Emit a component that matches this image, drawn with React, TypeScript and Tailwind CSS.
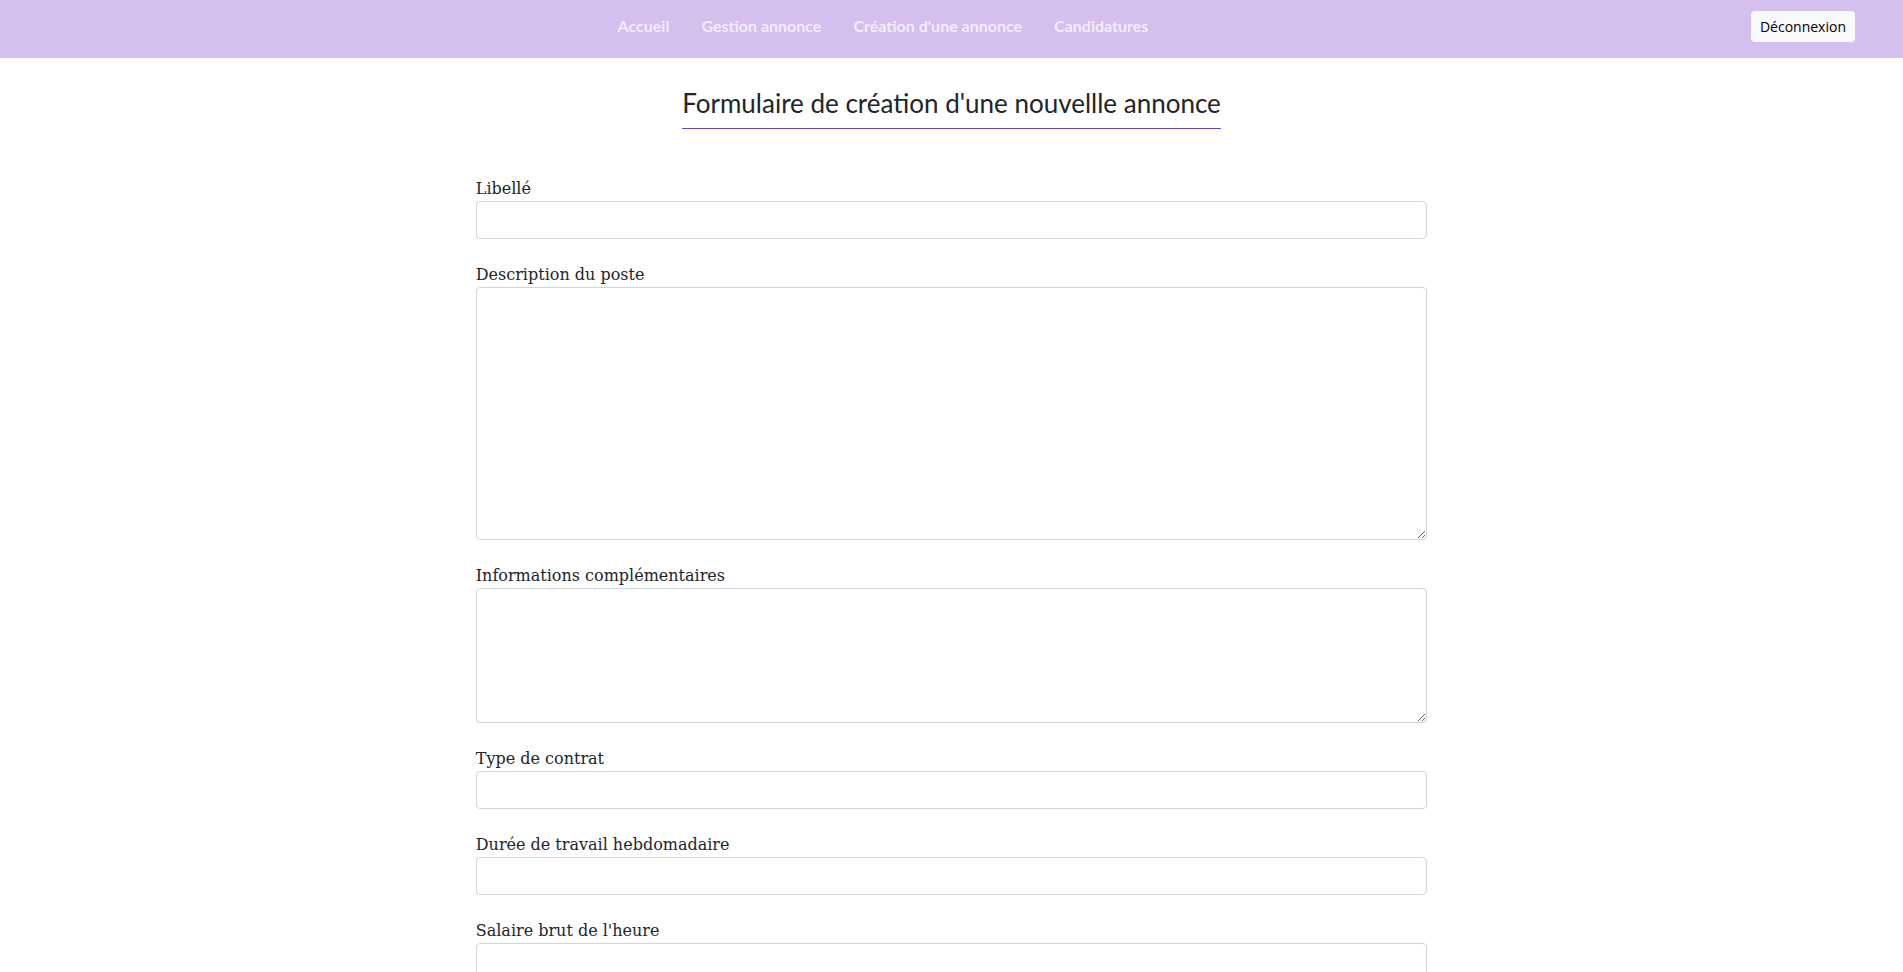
import React from "react";

const labelFont = { fontFamily: '"DejaVu Serif", serif' };

function Field({ label, area, h }: { label: string; area?: boolean; h?: string }) {
  return (
    <div className="mb-6">
      <label className="block text-[16px] leading-[24px] text-[#212529]" style={labelFont}>
        {label}
      </label>
      {area ? (
        <textarea
          className={`block w-full ${h} border border-[#ced4da] rounded-[4px] bg-white outline-none px-3 py-1.5`}
        />
      ) : (
        <input
          type="text"
          className="block w-full h-[38px] border border-[#ced4da] rounded-[4px] bg-white outline-none px-3"
        />
      )}
    </div>
  );
}

export default function App() {
  return (
    <div className="min-h-screen bg-white">
      <nav className="h-[58px] bg-[#d4bfee] flex items-center pr-12 pb-[5px]">
        <div className="flex-1 flex justify-center pl-[78px]">
          <ul
            className="flex items-center gap-[32px] text-[16px] font-bold text-[#f3ecfb] -mt-[2px]"
            style={{ fontFamily: 'Lato, sans-serif' }}
          >
            <li>Accueil</li>
            <li>Gestion annonce</li>
            <li>Création d'une annonce</li>
            <li>Candidatures</li>
          </ul>
        </div>
        <button
          className="ml-[63px] h-[31px] px-[9px] rounded-[4px] bg-[#f8f9fa] text-[14px] text-black"
          style={{ fontFamily: '"Open Sans", sans-serif' }}
        >
          Déconnexion
        </button>
      </nav>

      <div className="flex justify-center mt-[30px]">
        <h1
          className="text-[26px] leading-[1.2] text-[#212529] pb-[9px] border-b border-[#6f42c1]"
          style={{ fontFamily: 'Lato, sans-serif' }}
        >
          Formulaire de création d'une nouvellle annonce
        </h1>
      </div>

      <form className="w-1/2 mx-auto mt-12">
        <Field label="Libellé" />
        <Field label="Description du poste" area h="h-[253px]" />
        <Field label="Informations complémentaires" area h="h-[135px]" />
        <Field label="Type de contrat" />
        <Field label="Durée de travail hebdomadaire" />
        <Field label="Salaire brut de l'heure" />
        <Field label="Lieu de travail" />
      </form>
    </div>
  );
}
